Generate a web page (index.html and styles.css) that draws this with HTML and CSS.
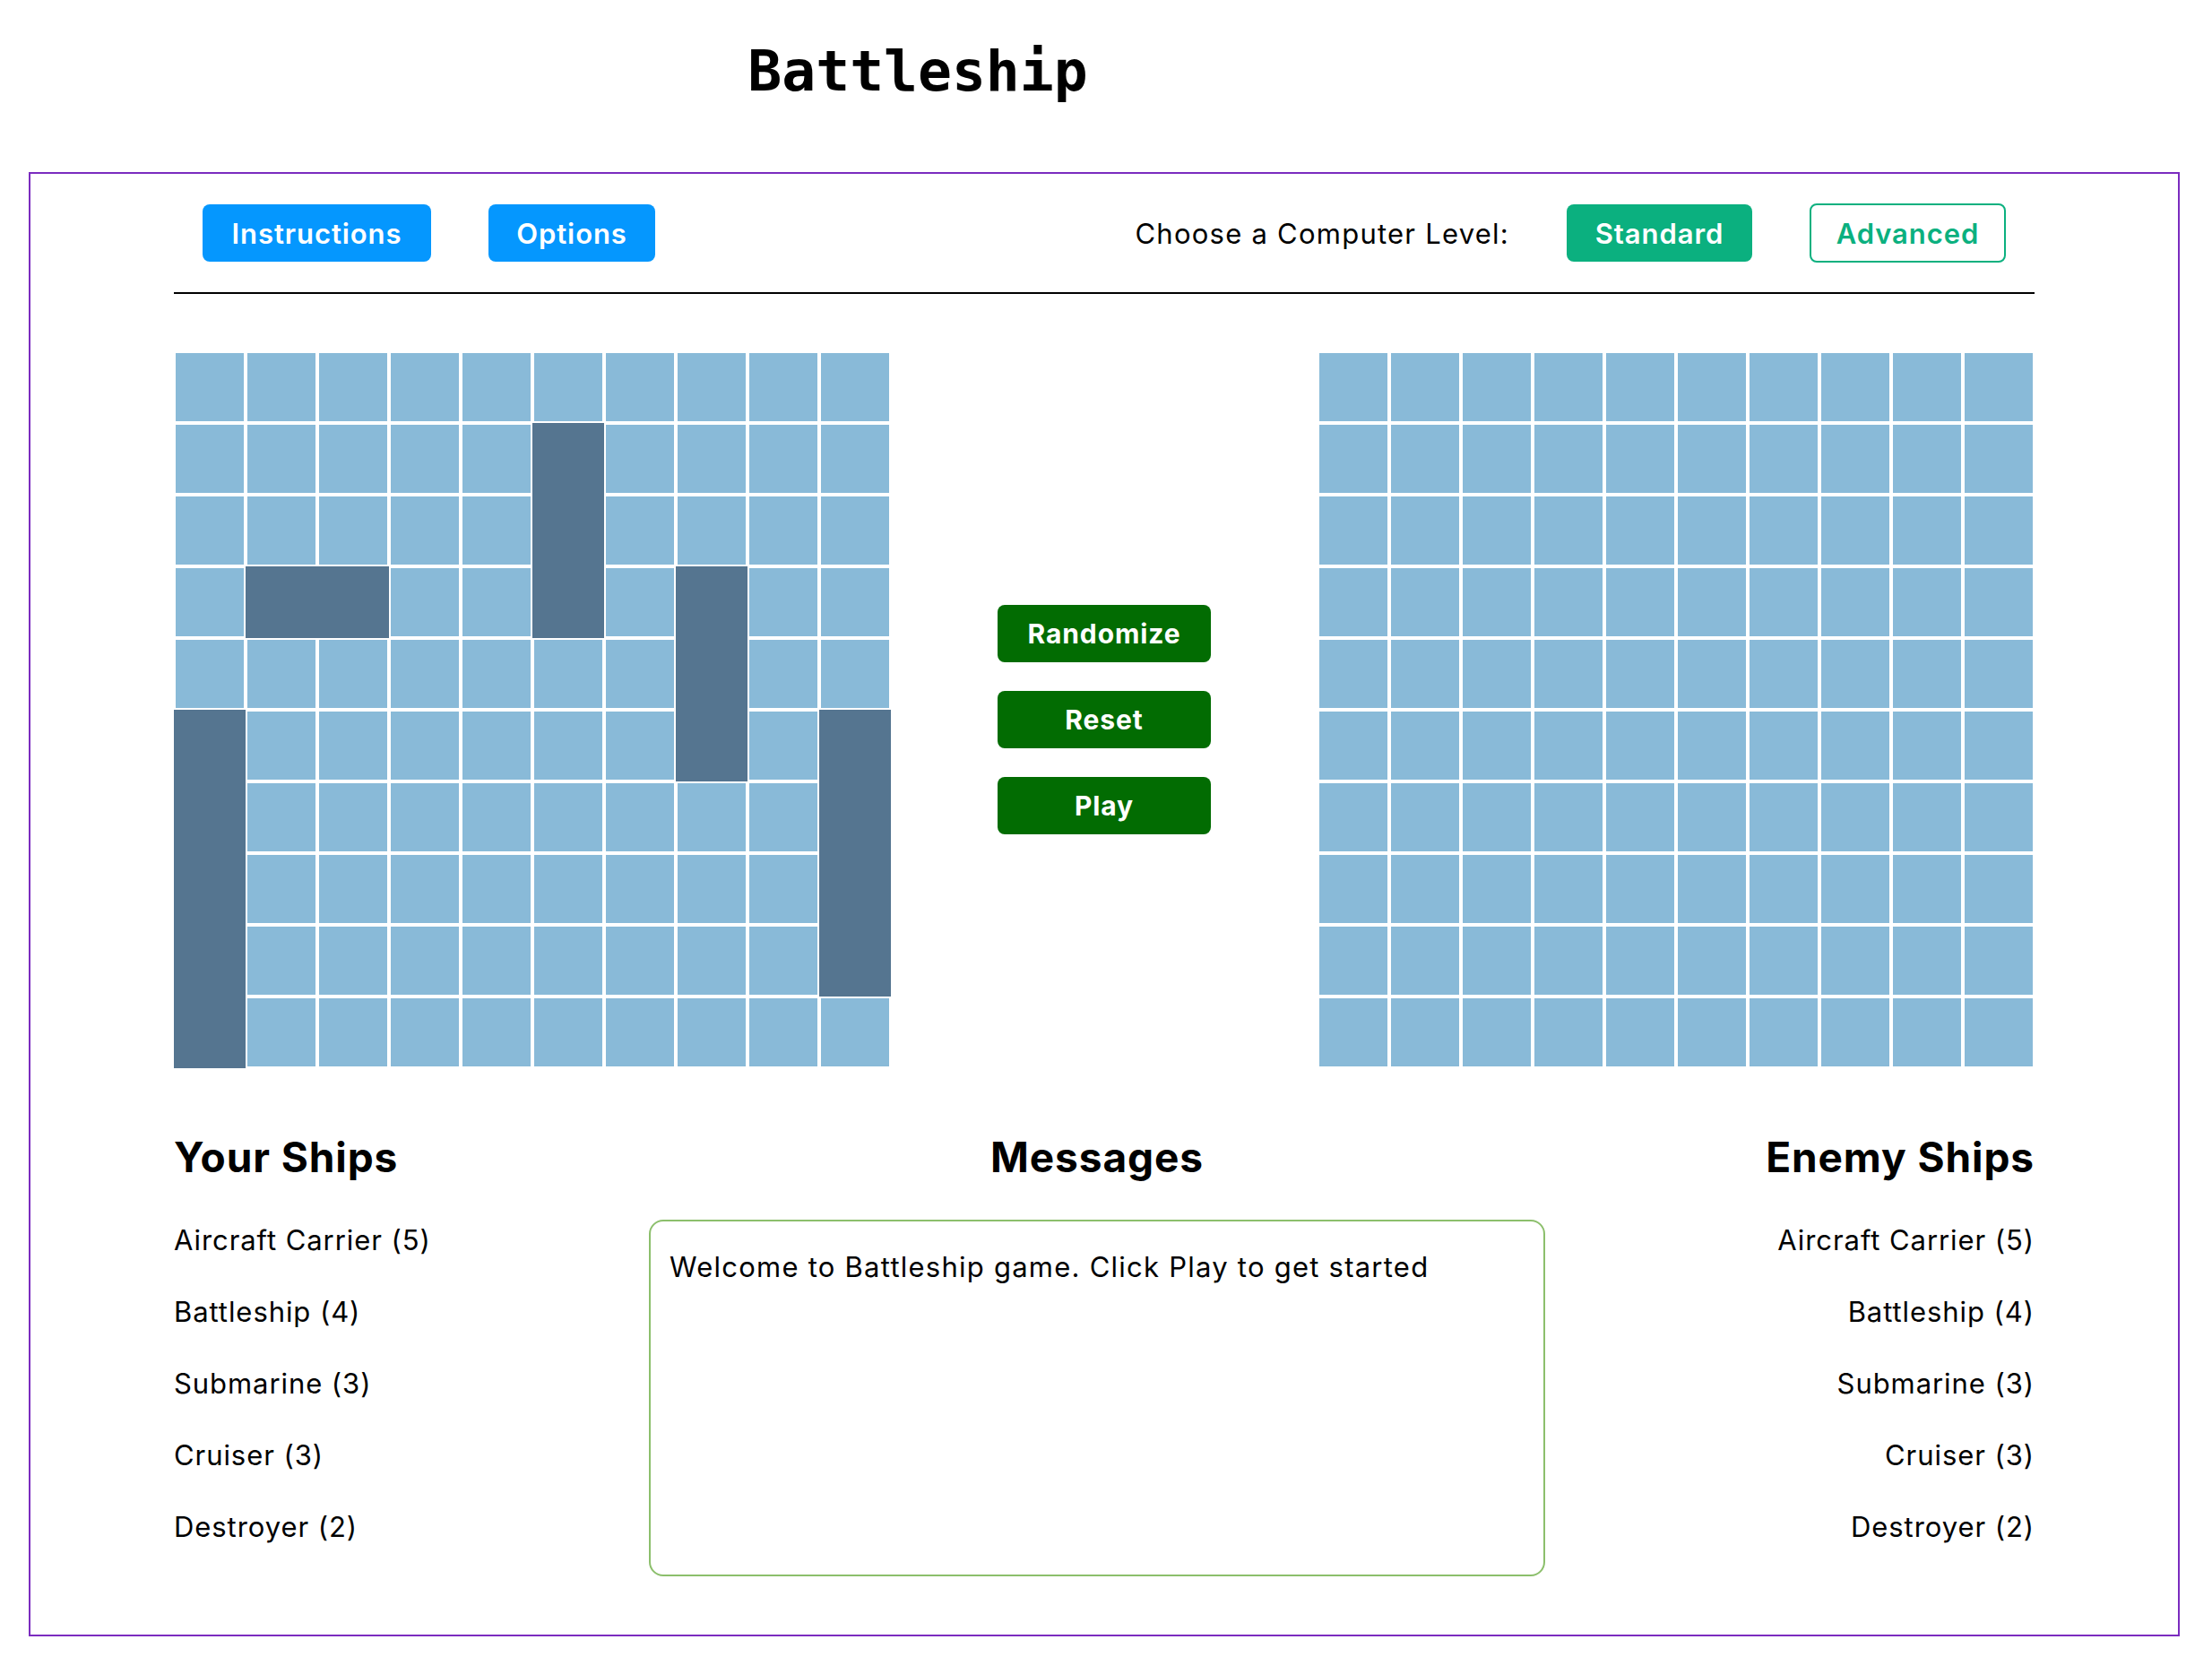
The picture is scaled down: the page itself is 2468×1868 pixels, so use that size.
FILE: index.html
```html
<!DOCTYPE html>
<html lang="en">
<head>
<meta charset="utf-8">
<title>Battleship</title>
<link rel="stylesheet" href="styles.css">
</head>
<body>
<h1 class="title">Battleship</h1>
<main class="game">
  <header class="toolbar">
    <div class="toolbar-group">
      <button class="btn btn-blue btn-instructions">Instructions</button>
      <button class="btn btn-blue btn-options">Options</button>
    </div>
    <div class="toolbar-group">
      <span class="level-label">Choose a Computer Level:</span>
      <button class="btn btn-standard">Standard</button>
      <button class="btn btn-advanced">Advanced</button>
    </div>
  </header>

  <section class="boards">
    <div class="board">
      <div class="cell"></div><div class="cell"></div><div class="cell"></div><div class="cell"></div><div class="cell"></div><div class="cell"></div><div class="cell"></div><div class="cell"></div><div class="cell"></div><div class="cell"></div>
      <div class="cell"></div><div class="cell"></div><div class="cell"></div><div class="cell"></div><div class="cell"></div><div class="cell ship"></div><div class="cell"></div><div class="cell"></div><div class="cell"></div><div class="cell"></div>
      <div class="cell"></div><div class="cell"></div><div class="cell"></div><div class="cell"></div><div class="cell"></div><div class="cell ship"></div><div class="cell"></div><div class="cell"></div><div class="cell"></div><div class="cell"></div>
      <div class="cell"></div><div class="cell ship"></div><div class="cell ship"></div><div class="cell"></div><div class="cell"></div><div class="cell ship"></div><div class="cell"></div><div class="cell ship"></div><div class="cell"></div><div class="cell"></div>
      <div class="cell"></div><div class="cell"></div><div class="cell"></div><div class="cell"></div><div class="cell"></div><div class="cell"></div><div class="cell"></div><div class="cell ship"></div><div class="cell"></div><div class="cell"></div>
      <div class="cell ship"></div><div class="cell"></div><div class="cell"></div><div class="cell"></div><div class="cell"></div><div class="cell"></div><div class="cell"></div><div class="cell ship"></div><div class="cell"></div><div class="cell ship"></div>
      <div class="cell ship"></div><div class="cell"></div><div class="cell"></div><div class="cell"></div><div class="cell"></div><div class="cell"></div><div class="cell"></div><div class="cell"></div><div class="cell"></div><div class="cell ship"></div>
      <div class="cell ship"></div><div class="cell"></div><div class="cell"></div><div class="cell"></div><div class="cell"></div><div class="cell"></div><div class="cell"></div><div class="cell"></div><div class="cell"></div><div class="cell ship"></div>
      <div class="cell ship"></div><div class="cell"></div><div class="cell"></div><div class="cell"></div><div class="cell"></div><div class="cell"></div><div class="cell"></div><div class="cell"></div><div class="cell"></div><div class="cell ship"></div>
      <div class="cell ship"></div><div class="cell"></div><div class="cell"></div><div class="cell"></div><div class="cell"></div><div class="cell"></div><div class="cell"></div><div class="cell"></div><div class="cell"></div><div class="cell"></div>
    </div>

    <div class="controls">
      <button class="btn btn-green">Randomize</button>
      <button class="btn btn-green">Reset</button>
      <button class="btn btn-green">Play</button>
    </div>

    <div class="board">
      <div class="cell"></div><div class="cell"></div><div class="cell"></div><div class="cell"></div><div class="cell"></div><div class="cell"></div><div class="cell"></div><div class="cell"></div><div class="cell"></div><div class="cell"></div>
      <div class="cell"></div><div class="cell"></div><div class="cell"></div><div class="cell"></div><div class="cell"></div><div class="cell"></div><div class="cell"></div><div class="cell"></div><div class="cell"></div><div class="cell"></div>
      <div class="cell"></div><div class="cell"></div><div class="cell"></div><div class="cell"></div><div class="cell"></div><div class="cell"></div><div class="cell"></div><div class="cell"></div><div class="cell"></div><div class="cell"></div>
      <div class="cell"></div><div class="cell"></div><div class="cell"></div><div class="cell"></div><div class="cell"></div><div class="cell"></div><div class="cell"></div><div class="cell"></div><div class="cell"></div><div class="cell"></div>
      <div class="cell"></div><div class="cell"></div><div class="cell"></div><div class="cell"></div><div class="cell"></div><div class="cell"></div><div class="cell"></div><div class="cell"></div><div class="cell"></div><div class="cell"></div>
      <div class="cell"></div><div class="cell"></div><div class="cell"></div><div class="cell"></div><div class="cell"></div><div class="cell"></div><div class="cell"></div><div class="cell"></div><div class="cell"></div><div class="cell"></div>
      <div class="cell"></div><div class="cell"></div><div class="cell"></div><div class="cell"></div><div class="cell"></div><div class="cell"></div><div class="cell"></div><div class="cell"></div><div class="cell"></div><div class="cell"></div>
      <div class="cell"></div><div class="cell"></div><div class="cell"></div><div class="cell"></div><div class="cell"></div><div class="cell"></div><div class="cell"></div><div class="cell"></div><div class="cell"></div><div class="cell"></div>
      <div class="cell"></div><div class="cell"></div><div class="cell"></div><div class="cell"></div><div class="cell"></div><div class="cell"></div><div class="cell"></div><div class="cell"></div><div class="cell"></div><div class="cell"></div>
      <div class="cell"></div><div class="cell"></div><div class="cell"></div><div class="cell"></div><div class="cell"></div><div class="cell"></div><div class="cell"></div><div class="cell"></div><div class="cell"></div><div class="cell"></div>
    </div>
  </section>

  <section class="info">
    <div class="ships">
      <h2 class="info-heading">Your Ships</h2>
      <ul class="ship-list">
        <li>Aircraft Carrier (5)</li>
        <li>Battleship (4)</li>
        <li>Submarine (3)</li>
        <li>Cruiser (3)</li>
        <li>Destroyer (2)</li>
      </ul>
    </div>
    <div class="messages">
      <h2 class="info-heading">Messages</h2>
      <div class="message-box">Welcome to Battleship game. Click Play to get started</div>
    </div>
    <div class="ships ships-enemy">
      <h2 class="info-heading">Enemy Ships</h2>
      <ul class="ship-list">
        <li>Aircraft Carrier (5)</li>
        <li>Battleship (4)</li>
        <li>Submarine (3)</li>
        <li>Cruiser (3)</li>
        <li>Destroyer (2)</li>
      </ul>
    </div>
  </section>
</main>
</body>
</html>
```
FILE: styles.css
```css
* { box-sizing: border-box; }

body {
  margin: 0;
  background: #fff;
  color: #000;
  font-family: Inter, "Liberation Sans", sans-serif;
}

.title {
  width: 2048px;
  margin: 40px 0 0;
  text-align: center;
  font-family: "DejaVu Sans Mono", "Liberation Mono", monospace;
  font-weight: 700;
  font-size: 63px;
  line-height: 80px;
}

.game {
  width: 2400px;
  margin: 72px 0 0 32px;
  border: 2px solid #7b2cbf;
  padding: 0 160px 65px;
}

/* toolbar */
.toolbar {
  display: flex;
  justify-content: space-between;
  align-items: center;
  padding: 33px 32px;
  border-bottom: 2px solid #000;
}

.toolbar-group {
  display: flex;
  align-items: center;
  gap: 64px;
}

.level-label {
  font-size: 31px;
  letter-spacing: 0.04em;
}

.btn {
  display: flex;
  align-items: center;
  justify-content: center;
  height: 64px;
  padding: 0;
  border: none;
  border-radius: 8px;
  font-family: Inter, "Liberation Sans", sans-serif;
  font-size: 31px;
  font-weight: 600;
  letter-spacing: 0.03em;
  color: #fff;
  cursor: pointer;
}

.btn-blue { background: #0597fe; }
.btn-instructions { width: 255px; }
.btn-options { width: 186px; }

.btn-standard {
  width: 207px;
  background: #0bb07f;
}

.btn-advanced {
  width: 219px;
  height: 66px;
  background: #fff;
  color: #0bb07f;
  border: 2px solid #0bb07f;
}

/* boards */
.boards {
  display: flex;
  justify-content: space-between;
  margin-top: 64px;
}

.board {
  display: grid;
  grid-template-columns: repeat(10, 80px);
  grid-auto-rows: 80px;
}

.cell {
  background: #89bad8;
  border: 2px solid #fff;
}

.cell.ship {
  background: #557590;
  border-color: #557590;
}

.controls {
  display: flex;
  flex-direction: column;
  gap: 32px;
  margin-top: 283px;
}

.btn-green {
  width: 238px;
  background: #026c02;
  font-weight: 700;
  font-size: 30px;
}

/* info */
.info {
  display: grid;
  grid-template-columns: 530px 1000px 1fr;
  align-items: start;
  margin-top: 71px;
}

.info-heading {
  margin: 0;
  font-size: 46px;
  line-height: 56px;
  font-weight: 700;
  letter-spacing: 0.02em;
}

.ship-list {
  list-style: none;
  margin: 25px 0 0;
  padding: 0;
}

.ship-list li {
  font-size: 31px;
  line-height: 80px;
  letter-spacing: 0.03em;
}

.ships-enemy { text-align: right; }

.messages { text-align: center; }

.message-box {
  margin-top: 42px;
  height: 398px;
  border: 2px solid #8cbf6c;
  border-radius: 16px;
  padding: 31px 21px;
  text-align: left;
  font-size: 31px;
  line-height: 40px;
  letter-spacing: 0.04em;
}
```
